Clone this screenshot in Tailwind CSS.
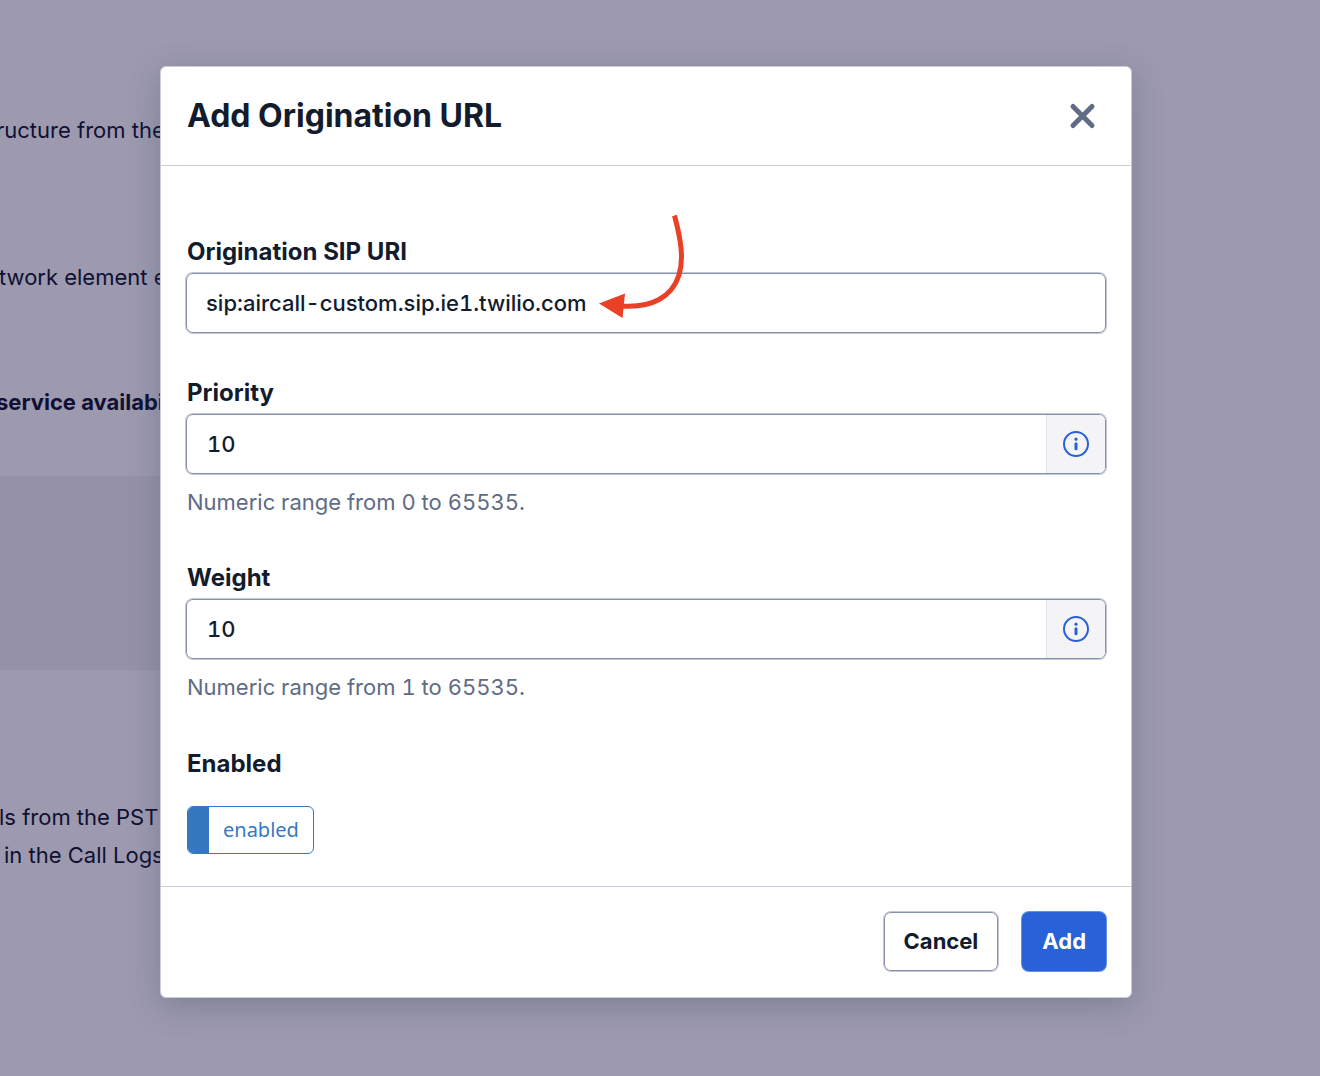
<!DOCTYPE html>
<html lang="en">
<head>
    <meta charset="UTF-8">
    <meta name="viewport" content="width=device-width, initial-scale=1.0">
    <title>Add Origination URL</title>
    <script src="https://cdn.jsdelivr.net/npm/@tailwindcss/browser@4"></script>
</head>
<body class="relative min-h-screen overflow-x-hidden bg-[#9d9aaf] font-['Inter',sans-serif] text-[#121c2d]">

    <!-- Page behind the dialog -->
    <main class="absolute inset-0 overflow-hidden whitespace-nowrap pt-[111px] text-[22px] leading-[38px] text-[#0f1033]" aria-hidden="true">
        <p class="-ml-1">ructure from the</p>
        <p class="-ml-px mt-[109px]">twork element e</p>
        <p class="-ml-1 mt-[87px] font-bold">service availabi</p>
        <div class="mt-[55px] mr-[188px] h-[194px] bg-[#9592a8]"></div>
        <p class="-ml-px mt-32">ls from the PSTN</p>
        <p class="ml-1">in the Call Logs</p>
    </main>

    <!-- Dialog -->
    <div class="relative pt-[66px] pr-[188px] pb-[78px] pl-40">
        <div role="dialog" aria-labelledby="dialogTitle" class="rounded-md border border-[#cacdd8] bg-white shadow-[0_8px_32px_rgba(57,71,98,0.32)]">
            <div class="flex items-center justify-between border-b border-[#cacdd8] pt-[25px] pr-[34px] pb-[25px] pl-[26px]">
                <h1 id="dialogTitle" class="text-[32px] leading-[48px] font-bold">Add Origination URL</h1>
                <button type="button" aria-label="Close" class="text-[#606b85]">
                    <svg class="size-7" viewBox="0 0 28 28" fill="none" stroke="currentColor" stroke-width="5" stroke-linecap="round">
                        <path d="M4 4.500l19 19M23 4.500l-19 19"/>
                    </svg>
                </button>
            </div>

            <form id="originationForm" class="px-[25px] pt-[72px] pb-8">
                <div>
                    <label for="sipUri" class="block pl-px text-[24px] leading-7 font-bold">Origination SIP URI</label>
                    <input type="text" id="sipUri" value="sip:aircall-custom.sip.ie1.twilio.com" class="mt-[7px] block h-[60px] w-full rounded-[7px] border border-[#8891aa] px-[19px] text-[22px] font-medium tabular-nums ring-1 ring-[#8891aa]/50">
                </div>

                <div class="mt-[46px]">
                    <label for="priority" class="block pl-px text-[24px] leading-7 font-bold">Priority</label>
                    <div class="mt-[7px] flex h-[60px] overflow-hidden rounded-[7px] border border-[#8891aa] ring-1 ring-[#8891aa]/50">
                        <input type="text" inputmode="numeric" id="priority" value="10" class="min-w-0 flex-1 px-5 text-[22px] font-medium tabular-nums">
                        <button type="button" aria-label="About priority" class="flex w-[59px] items-center justify-center border-l border-[#e1e3ea] bg-[#f4f4f6] text-[#2861d8]">
                            <svg class="size-[26px]" viewBox="0 0 26 26" fill="none" stroke="currentColor">
                                <circle cx="13" cy="13" r="12" stroke-width="2"/>
                                <circle cx="13" cy="8.200" r="1.600" fill="currentColor" stroke="none"/>
                                <path d="M13 12.800v5" stroke-width="3" stroke-linecap="round"/>
                            </svg>
                        </button>
                    </div>
                    <p class="mt-[14px] pl-px text-[22px] leading-7 text-[#606b85] tabular-nums">Numeric range from 0 to 65535.</p>
                </div>

                <div class="mt-12">
                    <label for="weight" class="block pl-px text-[24px] leading-7 font-bold">Weight</label>
                    <div class="mt-[7px] flex h-[60px] overflow-hidden rounded-[7px] border border-[#8891aa] ring-1 ring-[#8891aa]/50">
                        <input type="text" inputmode="numeric" id="weight" value="10" class="min-w-0 flex-1 px-5 text-[22px] font-medium tabular-nums">
                        <button type="button" aria-label="About weight" class="flex w-[59px] items-center justify-center border-l border-[#e1e3ea] bg-[#f4f4f6] text-[#2861d8]">
                            <svg class="size-[26px]" viewBox="0 0 26 26" fill="none" stroke="currentColor">
                                <circle cx="13" cy="13" r="12" stroke-width="2"/>
                                <circle cx="13" cy="8.200" r="1.600" fill="currentColor" stroke="none"/>
                                <path d="M13 12.800v5" stroke-width="3" stroke-linecap="round"/>
                            </svg>
                        </button>
                    </div>
                    <p class="mt-[14px] pl-px text-[22px] leading-7 text-[#606b85] tabular-nums">Numeric range from 1 to 65535.</p>
                </div>

                <div class="mt-[49px] pl-px">
                    <label for="enabled" class="block text-[24px] leading-7 font-bold">Enabled</label>
                    <button type="button" id="enabled" aria-pressed="true" class="mt-7 flex h-12 items-center overflow-hidden rounded-md border border-[#3578bf] font-['Noto_Sans',sans-serif] text-[20px] text-[#3578bf]">
                        <span class="h-full w-[21px] bg-[#3578bf]"></span>
                        <span class="px-[14px]">enabled</span>
                    </button>
                </div>
            </form>

            <div class="flex justify-end gap-6 border-t border-[#cacdd8] px-[25px] pt-[25px] pb-[26px] text-[22px] font-bold">
                <button type="button" class="h-[59px] rounded-[7px] border border-[#8891aa] px-[19px] ring-1 ring-[#8891aa]/50">Cancel</button>
                <button type="submit" form="originationForm" class="h-[59px] rounded-[7px] bg-[#2861d8] px-5 text-white ring-1 ring-[#2861d8]/70">Add</button>
            </div>
        </div>

        <!-- Arrow pointing at the SIP URI -->
        <svg class="pointer-events-none absolute top-[210px] left-[595px] h-[115px] w-[100px]" viewBox="0 0 100 115" fill="none">
            <path d="M79.500 5.500C86 30 89 49 84 65C77 87 57 98 27 96" stroke="#ea4025" stroke-width="5"/>
            <path d="M4 93.500L30 83.500L27.500 108z" fill="#ea4025"/>
        </svg>
    </div>

    <script>
        document.getElementById('originationForm').addEventListener('submit', function(e) {
            e.preventDefault();
        });
    </script>
</body>
</html>
